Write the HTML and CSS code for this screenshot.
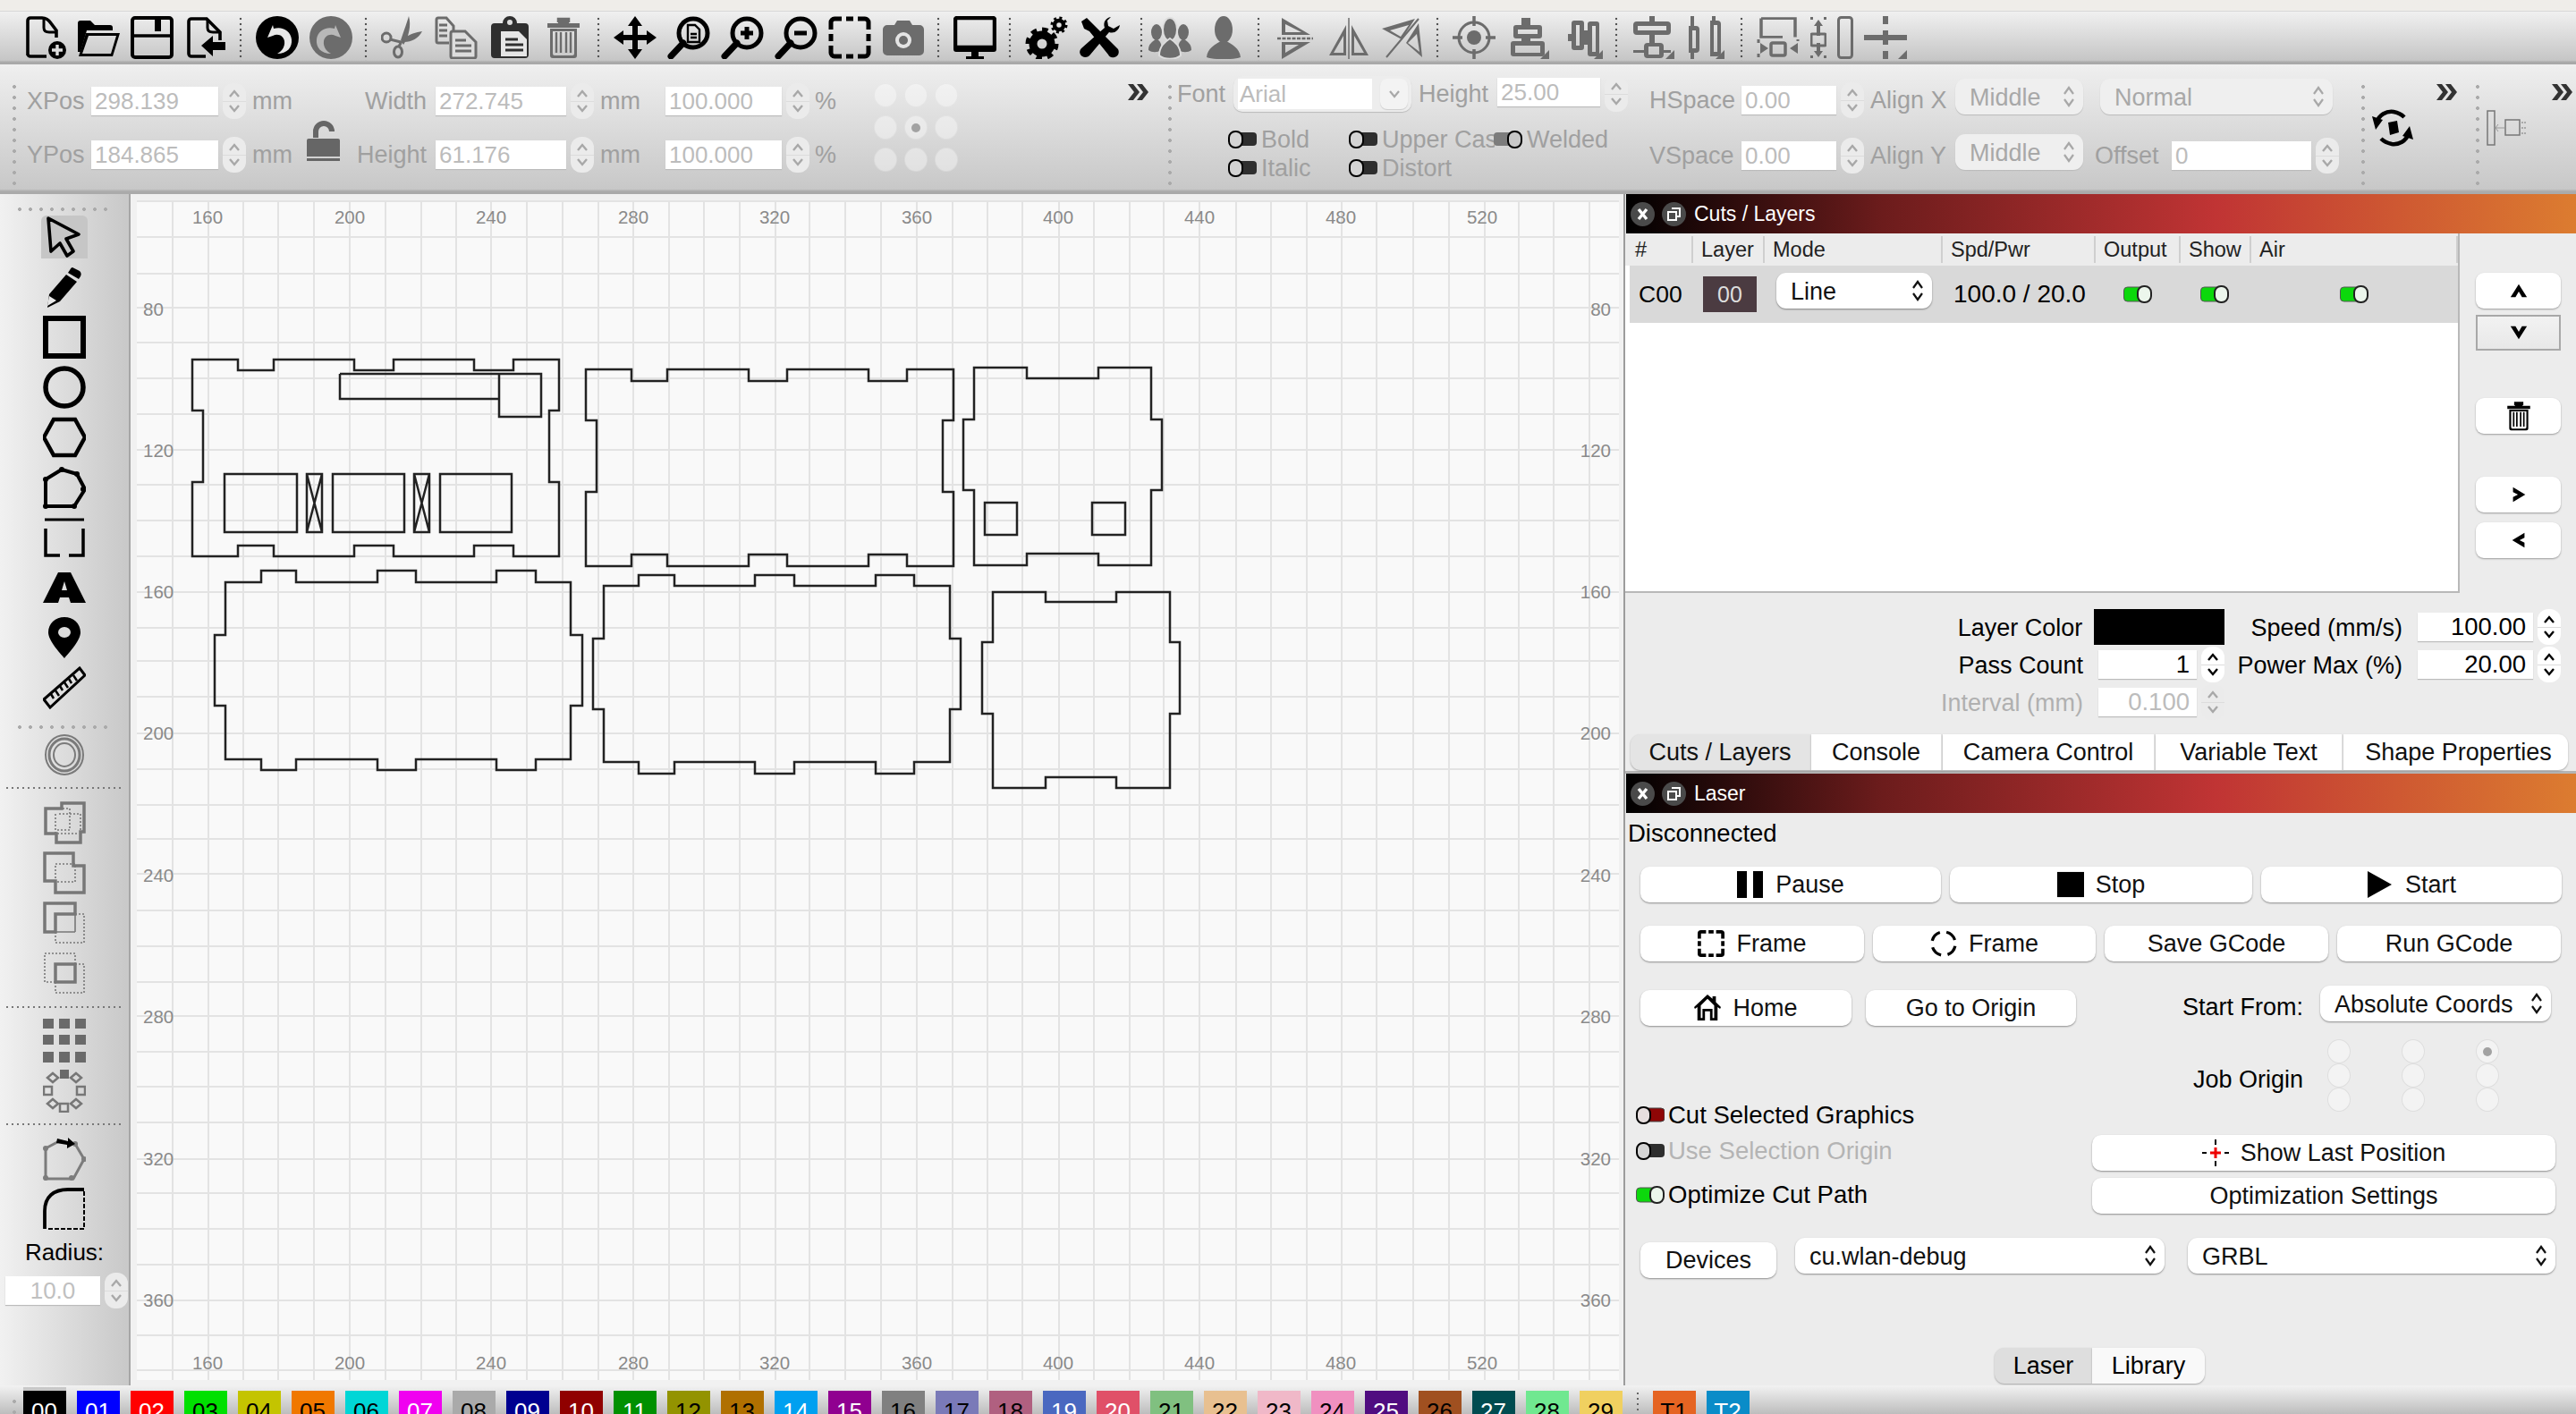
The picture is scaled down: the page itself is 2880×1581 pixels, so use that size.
FILE: index.html
```html
<!DOCTYPE html>
<html lang="en">
<head>
<meta charset="utf-8">
<title>LightBurn</title>
<link rel="stylesheet" href="styles.css">
</head>
<body>
<svg class="sprite" xmlns="http://www.w3.org/2000/svg">
  <symbol id="spin" viewBox="0 0 26 40"><rect width="26" height="40" rx="12"/><path d="M0 20.5H26" stroke="#dcdcdc" stroke-width="1" fill="none"/><path d="M8 15l5-6 5 6M8 25l5 6 5-6" fill="none" stroke="currentColor" stroke-width="2.4"/></symbol>
  <symbol id="updown" viewBox="0 0 14 26"><path d="M2 10l5-7 5 7M2 16l5 7 5-7" fill="none" stroke="currentColor" stroke-width="2.2"/></symbol>
  <symbol id="tg-off" viewBox="0 0 32 20"><rect x="6" y="2" width="26" height="15" rx="4" fill="#2e2e2e"/><rect x="1" y="1" width="15" height="18" rx="7" fill="#d4d4d4" stroke="#000" stroke-width="2"/></symbol>
  <symbol id="tg-red" viewBox="0 0 32 20"><rect x="6" y="2" width="26" height="15" rx="4" fill="#8e0606" stroke="#444" stroke-width="1"/><rect x="1" y="1" width="15" height="18" rx="7" fill="#e6dede" stroke="#000" stroke-width="2"/></symbol>
  <symbol id="tg-on" viewBox="0 0 32 20"><rect x="0.500" y="2" width="26" height="16" rx="4" fill="#0cd80c" stroke="#555" stroke-width="1"/><rect x="16" y="1" width="15" height="18" rx="7" fill="#ecf6ec" stroke="#222" stroke-width="2"/></symbol>
  <symbol id="tg-weld" viewBox="0 0 32 20"><rect x="0" y="2" width="26" height="15" rx="4" fill="#7c7c7c"/><rect x="16" y="1" width="15" height="18" rx="7" fill="#c8c8c8" stroke="#000" stroke-width="2"/></symbol>
  <symbol id="win-x" viewBox="0 0 27 27"><circle cx="13.5" cy="13.5" r="13.5" fill="#4a4a4a"/><path d="M9 8l9 11M18 8l-9 11" stroke="#fff" stroke-width="3.4"/></symbol>
  <symbol id="win-r" viewBox="0 0 27 27"><circle cx="13.5" cy="13.5" r="13.5" fill="#4a4a4a"/><path d="M11 7h9v9h-3M7 11h9v9H7z" fill="none" stroke="#fff" stroke-width="2"/></symbol>
  <symbol id="chev" viewBox="0 0 27 20"><path d="M2 1h6l7 9-7 9H2l7-9zM12 1h6l7 9-7 9h-6l7-9z" fill="currentColor"/></symbol>
  <symbol id="trash" viewBox="0 0 48 48"><path d="M6 8h36v5H6zM18 8V3h12v5" fill="currentColor"/><path d="M18 7V3h12v4" fill="none" stroke="currentColor" stroke-width="2.5"/><path d="M9 14h30v30a3 3 0 0 1-3 3H12a3 3 0 0 1-3-3zM12 17v25a2 2 0 0 0 2 2h20a2 2 0 0 0 2-2V17z" fill="currentColor" fill-rule="evenodd"/><path d="M16 18v23M21 18v23M27 18v23M32 18v23" stroke="currentColor" stroke-width="2.4"/></symbol>
</svg>

<div class="app">
  <div class="titlestrip"></div>

  <div class="toolbar">
    <svg class="ic" viewBox="0 0 48 48"><path d="M5 44V5a3 3 0 0 1 3-3h13c5 0 8 3 10 6l6 8v8M26 45H8a3 3 0 0 1-3-3" fill="none" stroke="currentColor" stroke-width="3.6"/><path d="M23 3v10c0 4 3 5 6 5h8" fill="none" stroke="currentColor" stroke-width="3"/><circle cx="38" cy="38" r="10"/><path d="M38 32v12M32 38h12" stroke="#ddd" stroke-width="3.4"/></svg>
    <svg class="ic" viewBox="0 0 48 48"><path d="M1 8q0-3 3-3h11l5 5h17q3 0 3 3v3H11L4 40H1z"/><path fill-rule="evenodd" d="M10 19h38l-8 26H2zM13 22L6 42h32l6-20z"/></svg>
    <svg class="ic" viewBox="0 0 48 48"><rect x="2" y="2" width="44" height="44" rx="3" fill="none" stroke="currentColor" stroke-width="4"/><path d="M2 22h44" stroke="currentColor" stroke-width="3.5"/><path d="M27 4h7v13h-7z"/></svg>
    <svg class="ic" viewBox="0 0 48 48"><path d="M24 45H8a3 3 0 0 1-3-3V6a3 3 0 0 1 3-3h17l15 15v9" fill="none" stroke="currentColor" stroke-width="3.6"/><path d="M26 3v10c0 4 3 5 6 5h8" fill="none" stroke="currentColor" stroke-width="3"/><path d="M19 33l13-11v7h14v9H32v7z"/></svg>
    <span class="vsep"></span>
    <svg class="ic" viewBox="0 0 48 48"><ellipse cx="24" cy="24" rx="24" ry="24"/><path d="M19 10l-6 14 6-2c6-3 12 0 13 6 1 7-4 12-8 14 11 0 17-7 16-16-1-10-11-15-20-12z" fill="#e8e8e8"/></svg>
    <svg class="ic dim" viewBox="0 0 48 48"><circle cx="24" cy="24" r="24"/><path d="M29 10l6 14-6-2c-6-3-12 0-13 6-1 7 4 12 8 14-11 0-17-7-16-16 1-10 11-15 20-12z" fill="#b8b8b8"/></svg>
    <span class="vsep"></span>
    <svg class="ic dim" viewBox="0 0 48 48"><path d="M22 27C26 15 29 7 31 0c3 10 0 24-6 32zM26 25c6-5 13-7 20-8-4 8-12 12-20 12z"/><circle cx="6" cy="24" r="5" fill="none" stroke="currentColor" stroke-width="3"/><ellipse cx="19" cy="40" rx="4.500" ry="6" fill="none" stroke="currentColor" stroke-width="3"/><path d="M10 26l12 3M20 34l3-6" stroke="currentColor" stroke-width="3"/></svg>
    <svg class="ic dim" viewBox="0 0 48 48"><path d="M16 30H4a2 2 0 0 1-2-2V4a2 2 0 0 1 2-2h9l8 9v6" fill="none" stroke="currentColor" stroke-width="3"/><path d="M5 10h9M5 16h9M5 22h9" stroke="currentColor" stroke-width="3"/><path d="M20 17h14l12 12v16a2 2 0 0 1-2 2H20a2 2 0 0 1-2-2V19a2 2 0 0 1 2-2z" fill="#ddd" stroke="currentColor" stroke-width="3"/><path d="M23 27h12M23 33h18M23 39h18" stroke="currentColor" stroke-width="3"/></svg>
    <svg class="ic dark" viewBox="0 0 48 48"><path d="M7 8h9a8 8 0 0 1 16 0h9a4 4 0 0 1 4 4v31a4 4 0 0 1-4 4H7a4 4 0 0 1-4-4V12a4 4 0 0 1 4-4z"/><circle cx="24" cy="7" r="3" fill="#ddd"/><path d="M14 17h20l9 9v19H14z" fill="#e6e6e6"/><path d="M19 26h14M19 32h20M19 38h20" stroke="currentColor" stroke-width="3.2"/></svg>
    <svg class="ic dim" viewBox="0 0 48 48"><use href="#trash"/></svg>
    <span class="vsep"></span>
    <svg class="ic" viewBox="0 0 48 48"><path d="M24 0l8 11h-5v10h10v-5l11 8-11 8v-5H27v10h5l-8 11-8-11h5V27H11v5L0 24l11-8v5h10V11h-5z"/></svg>
    <svg class="ic" viewBox="0 0 48 48"><circle cx="29" cy="19" r="16" fill="none" stroke="currentColor" stroke-width="5"/><path d="M18 30L4 45" stroke="currentColor" stroke-width="7" stroke-linecap="round"/><path d="M23 10h8l5 5v14H23zM26 20h7M26 24h7" fill="none" stroke="currentColor" stroke-width="2.4"/></svg>
    <svg class="ic" viewBox="0 0 48 48"><circle cx="29" cy="19" r="16" fill="none" stroke="currentColor" stroke-width="5"/><path d="M18 30L4 45" stroke="currentColor" stroke-width="7" stroke-linecap="round"/><path d="M29 12v14M22 19h14" stroke="currentColor" stroke-width="5"/></svg>
    <svg class="ic" viewBox="0 0 48 48"><circle cx="29" cy="19" r="16" fill="none" stroke="currentColor" stroke-width="5"/><path d="M18 30L4 45" stroke="currentColor" stroke-width="7" stroke-linecap="round"/><path d="M22 19h14" stroke="currentColor" stroke-width="5"/></svg>
    <svg class="ic" viewBox="0 0 48 48"><path d="M15 3H7a4 4 0 0 0-4 4v8M33 3h8a4 4 0 0 1 4 4v8M15 45H7a4 4 0 0 1-4-4v-8M33 45h8a4 4 0 0 0 4-4v-8M20 3h8M20 45h8M3 20v8M45 20v8" fill="none" stroke="currentColor" stroke-width="5"/></svg>
    <svg class="ic dim" viewBox="0 0 48 48"><path d="M6 10h8l3-5h14l3 5h8a5 5 0 0 1 5 5v24a5 5 0 0 1-5 5H6a5 5 0 0 1-5-5V15a5 5 0 0 1 5-5z"/><circle cx="24" cy="27" r="9" fill="#e4e4e4"/><circle cx="24" cy="27" r="5"/></svg>
    <span class="vsep"></span>
    <svg class="ic" viewBox="0 0 48 48"><rect x="2" y="2" width="44" height="33" rx="2" fill="none" stroke="currentColor" stroke-width="4.500"/><path d="M0 33h48v4a3 3 0 0 1-3 3H3a3 3 0 0 1-3-3zM20 40h8v5h6v3H14v-3h6z"/></svg>
    <span class="vsep"></span>
    <svg class="ic" viewBox="0 0 48 48"><g fill="none" stroke="currentColor"><circle cx="19" cy="31" r="10" stroke-width="9"/><circle cx="19" cy="31" r="16" stroke-width="5" stroke-dasharray="6.500 6"/><circle cx="38" cy="10" r="5" stroke-width="4.500"/><circle cx="38" cy="10" r="8" stroke-width="3" stroke-dasharray="3 3.300"/></g></svg>
    <svg class="ic" viewBox="0 0 48 48"><path d="M36 1c-6 1-9 6-7 12L3 36c-3 3-2 7 1 9s7 1 9-2l21-25c6 2 11-2 12-8l-7 4-6-3-1-6z"/><path d="M3 6l6-4 35 35c2 4 0 8-4 9s-6-1-7-3L12 17 6 14z"/></svg>
    <span class="vsep narrow"></span>
    <svg class="ic dim" viewBox="0 0 48 48"><ellipse cx="9" cy="18" rx="6" ry="9"/><path d="M0 38c0-7 4-9 9-13 5 4 6 6 5 13-4 3-10 3-14 0z"/><ellipse cx="39" cy="18" rx="6" ry="9"/><path d="M48 38c0-7-4-9-9-13-5 4-6 6-5 13 4 3 10 3 14 0z"/><ellipse cx="24" cy="15" rx="8" ry="13" stroke="#ddd" stroke-width="2"/><path d="M24 25c-6 4-12 9-12 19 6 5 18 5 24 0 0-10-6-15-12-19z" stroke="#ddd" stroke-width="2"/></svg>
    <svg class="ic dim" viewBox="0 0 48 48"><ellipse cx="24" cy="15" rx="10" ry="15"/><path d="M24 26c-10 6-18 10-19 20 8 3 30 3 38 0-1-10-9-14-19-20z"/></svg>
    <span class="vsep"></span>
    <svg class="ic dim" viewBox="0 0 48 48"><path d="M9 2l32 19H9zM13 9v9h18zM9 29h32L9 48zM13 32v9l15-9z" fill-rule="evenodd"/><path d="M4 25h40" stroke="currentColor" stroke-width="2.500" stroke-dasharray="4 1.500"/></svg>
    <svg class="ic dim" viewBox="0 0 48 48"><path d="M21 10v34H2zM18 22L7 41h11zM27 10v34h19zM30 22l11 19H30z" fill-rule="evenodd"/><path d="M24 2v46" stroke="currentColor" stroke-width="1.500"/></svg>
    <svg class="ic dim" viewBox="0 0 48 48"><path d="M1 14L38 3 23 26zM10 16l21-6-9 13z" fill-rule="evenodd"/><path d="M42 8L46 46 28 30zM40 20L30 30 43 40z" fill-rule="evenodd"/><path d="M42 3L6 46" stroke="currentColor" stroke-width="2"/></svg>
    <span class="vsep"></span>
    <svg class="ic dim" viewBox="0 0 48 48"><circle cx="24" cy="24" r="17" fill="none" stroke="currentColor" stroke-width="3"/><circle cx="24" cy="24" r="8"/><path d="M24 0v11M24 37v11M0 24h11M37 24h11" stroke="currentColor" stroke-width="3.500"/></svg>
    <svg class="ic dim" viewBox="0 0 48 48"><path d="M17 2h10v8h10a3 3 0 0 1 3 3v9a3 3 0 0 1-3 3H27v3h13a3 3 0 0 1 3 3v11a3 3 0 0 1-3 3H8a3 3 0 0 1-3-3V31a3 3 0 0 1 3-3h9v-3H11a3 3 0 0 1-3-3v-9a3 3 0 0 1 3-3h6zM13 15v5h22v-5zM10 33v8h28v-8z" fill-rule="evenodd"/><path d="M48 38v10H38z"/></svg>
    <svg class="ic dim" viewBox="0 0 48 48"><path d="M16 5h8a3 3 0 0 1 3 3v8h4V9a3 3 0 0 1 3-3h7a3 3 0 0 1 3 3v33a3 3 0 0 1-3 3h-7a3 3 0 0 1-3-3V32h-4v3a3 3 0 0 1-3 3h-8a3 3 0 0 1-3-3v-7H9V20h4v-12a3 3 0 0 1 3-3zM18 10v23h4V10zM36 11v29h4V11z" fill-rule="evenodd"/><path d="M48 38v10H38z"/></svg>
    <span class="vsep"></span>
    <svg class="ic dim" viewBox="0 0 48 48"><path d="M6 6h34a4 4 0 0 1 4 4v7a4 4 0 0 1-4 4H6a4 4 0 0 1-4-4v-7a4 4 0 0 1 4-4zM7 11v5h32v-5zM18 30h14a4 4 0 0 1 4 4v4h8v3h-8v2a4 4 0 0 1-4 4H18a4 4 0 0 1-4-4v-2H2v-3h12v-4a4 4 0 0 1 4-4zM19 34v9h12v-9z" fill-rule="evenodd"/><path d="M20 0h6v6h-6zM20 21h6v9h-6zM48 38v10H38z"/></svg>
    <svg class="ic dim" viewBox="0 0 48 48"><path d="M4 11h8a4 4 0 0 1 4 4v22a4 4 0 0 1-4 4H4zM8 16v20h4V16zM28 5h8a4 4 0 0 1 4 4v32a4 4 0 0 1-4 4h-8zM32 10v30h4V10z" fill-rule="evenodd"/><path d="M6 0h4v11H6zM6 41h4v7H6zM30 0h4v5h-4z"/><path d="M44 38v10H34z"/></svg>
    <span class="vsep"></span>
    <svg class="ic dim" viewBox="0 0 48 48"><path d="M5 2h38v26M5 2v26h24" fill="none" stroke="currentColor" stroke-width="3.500" transform="translate(0 1) scale(1 .8)"/><path d="M4 30l9 6-9 6zM46 30l-9 6 9 6z"/><rect x="16" y="30" width="16" height="14" rx="2" fill="none" stroke="currentColor" stroke-width="3.500"/><path d="M2 26v4M2 42v4M46 26v2" stroke="currentColor" stroke-width="3"/></svg>
    <svg class="ic dim thin" viewBox="0 0 18 48"><path d="M9 4l5 7h-3v11H7V11H4zM9 46l5-7h-3V30H7v9H4z"/><rect x="1" y="20" width="16" height="13" rx="1" fill="none" stroke="currentColor" stroke-width="3"/><path d="M0 1h3v3H0zM15 1h3v3h-3zM0 44h3v3H0zM15 44h3v3h-3z"/></svg>
    <svg class="ic dim thin" viewBox="0 0 18 48"><rect x="1.500" y="1.500" width="15" height="45" rx="3" fill="none" stroke="currentColor" stroke-width="3"/></svg>
    <svg class="ic dim" viewBox="0 0 48 48"><path d="M21 0h6v9h-6zM21 16h6v16h-6zM8 21h32v6H8zM0 21h10v6H0zM38 21h10v6H38zM21 39h6v9h-6z"/><path d="M48 38v10H38z"/></svg>
  </div>

  <div class="props">
    <div class="sec sec-a">
      <span class="vgrip"></span>
      <div class="col pos">
        <div class="field"><span class="lb w-72">XPos</span><span class="inp w-142 ml-8">298.139</span><svg class="spin ml-5"><use href="#spin"/></svg><span class="lb ml-7">mm</span></div>
        <div class="field"><span class="lb w-72">YPos</span><span class="inp w-142 ml-8">184.865</span><svg class="spin ml-5"><use href="#spin"/></svg><span class="lb ml-7">mm</span></div>
      </div>
      <svg class="lock" viewBox="0 0 37 48"><path d="M8 19v-7a9 9 0 0 1 18 0" fill="none" stroke="currentColor" stroke-width="6" transform="translate(2 0)"/><path d="M2 20h33a2 2 0 0 1 2 2v18H0V22a2 2 0 0 1 2-2zM0 42h37v3H0z"/></svg>
      <div class="col size">
        <div class="field"><span class="lb w-100 ta-r">Width</span><span class="inp w-146 ml-10">272.745</span><svg class="spin ml-5"><use href="#spin"/></svg><span class="lb ml-7">mm</span></div>
        <div class="field"><span class="lb w-100 ta-r">Height</span><span class="inp w-146 ml-10">61.176</span><svg class="spin ml-5"><use href="#spin"/></svg><span class="lb ml-7">mm</span></div>
      </div>
      <div class="col pct">
        <div class="field"><span class="inp w-130">100.000</span><svg class="spin ml-5"><use href="#spin"/></svg><span class="lb ml-6">%</span></div>
        <div class="field"><span class="inp w-130">100.000</span><svg class="spin ml-5"><use href="#spin"/></svg><span class="lb ml-6">%</span></div>
      </div>
      <div class="radios rad-props">
        <i class="rad"></i><i class="rad"></i><i class="rad"></i>
        <i class="rad"></i><i class="rad sel"></i><i class="rad"></i>
        <i class="rad"></i><i class="rad"></i><i class="rad"></i>
      </div>
      <svg class="chev chev-a"><use href="#chev"/></svg>
    </div>

    <div class="sec sec-b">
      <span class="vgrip"></span>
      <div class="fontbox">
        <div class="fontrow">
          <span class="lb">Font</span>
          <span class="fontcombo"><span class="fontname">Arial</span><span class="fontdrop"><svg class="dropv" viewBox="0 0 14 10"><path d="M2 2l5 6 5-6" fill="none" stroke="currentColor" stroke-width="2.200"/></svg></span></span>
          <span class="lb ml-8">Height</span>
          <span class="inp w-115 ml-10 up-4">25.00</span>
          <svg class="spin ml-5"><use href="#spin"/></svg>
        </div>
        <div class="checks">
          <span class="chk"><svg class="tg"><use href="#tg-off"/></svg><span class="lb">Bold</span></span>
          <span class="chk c-upper"><svg class="tg"><use href="#tg-off"/></svg><span class="lb">Upper Case</span></span>
          <span class="chk c-weld"><svg class="tg"><use href="#tg-weld"/></svg><span class="lb">Welded</span></span>
          <span class="chk"><svg class="tg"><use href="#tg-off"/></svg><span class="lb">Italic</span></span>
          <span class="chk c-upper"><svg class="tg"><use href="#tg-off"/></svg><span class="lb">Distort</span></span>
        </div>
      </div>
      <div class="col spacing">
        <div class="field"><span class="lb w-94 ta-r">HSpace</span><span class="inp w-106 ml-9">0.00</span><svg class="spin ml-5"><use href="#spin"/></svg><span class="lb w-85 ml-7">Align X</span>
          <span class="combo dis w-143 ml-10 raise"><span>Middle</span><svg class="ud"><use href="#updown"/></svg></span>
          <span class="combo dis w-260 ml-19 raise"><span>Normal</span><svg class="ud"><use href="#updown"/></svg></span></div>
        <div class="field"><span class="lb w-94 ta-r">VSpace</span><span class="inp w-106 ml-9">0.00</span><svg class="spin ml-5"><use href="#spin"/></svg><span class="lb w-85 ml-7">Align Y</span>
          <span class="combo dis w-143 ml-10 raise"><span>Middle</span><svg class="ud"><use href="#updown"/></svg></span>
          <span class="lb ml-13 w-76">Offset</span><span class="inp w-156 ml-10">0</span><svg class="spin ml-5"><use href="#spin"/></svg></div>
      </div>
    </div>

    <div class="sec sec-c">
      <span class="vgrip"></span>
      <svg class="syncic" viewBox="0 0 48 42"><path d="M6 15C9 6 17 2 25 3c5 1 9 3 12 6M42 27c-3 9-11 13-19 12-5-1-9-3-12-6" fill="none" stroke="#000" stroke-width="4.500"/><path d="M1 8l12 4-8 11zM47 34L35 30l8-11z"/><path d="M19 15l10-2 2 13-10 3z"/></svg>
      <svg class="chev chev-c"><use href="#chev"/></svg>
    </div>

    <div class="sec sec-d">
      <span class="vgrip"></span>
      <svg class="laseric" viewBox="0 0 45 40"><rect x="1" y="1" width="8" height="38" fill="none" stroke="#777" stroke-width="1.500"/><path d="M10 20h10M13 16l-3 4 3 4" fill="none" stroke="#999" stroke-width="1"/><rect x="21" y="11" width="16" height="17" fill="none" stroke="#777" stroke-width="1.500"/><path d="M39 14h5M39 20h5M39 26h5" stroke="#999" stroke-width="1.500" stroke-dasharray="2 1"/></svg>
      <svg class="chev chev-d"><use href="#chev"/></svg>
    </div>
  </div>

  <div class="main">
    <div class="tools">
      <span class="gripdots"></span>
      <span class="tool active"><svg viewBox="0 0 48 48"><path d="M6 3l34 18-14 5 8 14-7 5-8-14-10 9z" fill="none" stroke="#000" stroke-width="3.600" stroke-linejoin="round"/></svg></span>
      <span class="tool"><svg viewBox="0 0 48 48"><path d="M33 2l8 4c2 2 2 4 1 6l-2 3-12-7 2-3c1-2 2-3 3-3zM26 10l12 8-19 22-14 7 2-15z"/><path d="M7 34l-2 11 10-6z" fill="#e8e8e8"/></svg></span>
      <span class="tool"><svg viewBox="0 0 48 48"><rect x="3" y="3" width="42" height="42" fill="none" stroke="#000" stroke-width="6"/></svg></span>
      <span class="tool"><svg viewBox="0 0 48 48"><circle cx="24" cy="24" r="21" fill="none" stroke="#000" stroke-width="5.500"/></svg></span>
      <span class="tool"><svg viewBox="0 0 48 48"><path d="M13 4h24l11 20-11 20H13L2 24z" fill="none" stroke="#000" stroke-width="4.500" transform="translate(-1 0)"/></svg></span>
      <span class="tool"><svg viewBox="0 0 48 48"><path d="M3 15L21 4l17 5 9 17-12 19H3z" fill="none" stroke="#000" stroke-width="4"/><circle cx="3" cy="15" r="3"/><circle cx="21" cy="4" r="3"/><circle cx="38" cy="9" r="3"/><circle cx="45" cy="26" r="3"/><circle cx="35" cy="45" r="3"/><circle cx="3" cy="45" r="3"/></svg></span>
      <span class="tool"><svg viewBox="0 0 48 48"><path d="M2 4h44" stroke="#000" stroke-width="3"/><path d="M3 14v30h16M45 14v30H29" fill="none" stroke="#000" stroke-width="3.500"/></svg></span>
      <span class="tool"><svg viewBox="0 0 48 48"><path d="M17 7h14l17 34H31l-2-6H19l-2 6H0zM24 17l-3 10h6z" fill-rule="evenodd"/></svg></span>
      <span class="tool"><svg viewBox="0 0 48 48"><path d="M24 1c10 0 18 7 18 17 0 9-12 22-18 29C18 40 6 27 6 18 6 8 14 1 24 1z"/><ellipse cx="24" cy="18" rx="7" ry="6" fill="#ddd"/></svg></span>
      <span class="tool"><svg viewBox="0 0 48 48"><path d="M1 37L41 2l6 8L8 46z" fill="#e0e0e0" stroke="#000" stroke-width="3"/><path d="M9 31l3 5M14 27l4 6M19 22l3 5M24 18l4 6M29 14l3 5M34 10l4 6" stroke="#000" stroke-width="2.500"/></svg></span>
      <span class="gripdots g2"></span>
      <svg class="solo s-off" viewBox="0 0 48 48"><ellipse cx="24" cy="24" rx="21" ry="22" fill="none" stroke="#7a7a7a" stroke-width="2"/><ellipse cx="24" cy="24" rx="17" ry="18" fill="none" stroke="#7a7a7a" stroke-width="3"/><ellipse cx="24" cy="24" rx="12" ry="13" fill="none" stroke="#7a7a7a" stroke-width="2"/></svg>
      <span class="dotline d1"></span>
      <svg class="solo" viewBox="0 0 48 48"><path d="M3 8h18V2h25v32H42v12H15V36H3z" fill="none" stroke="#777" stroke-width="3.500"/><path d="M14 14v22h26M30 8v8M18 14h24v18M22 8h8v24H14" fill="none" stroke="#777" stroke-width="1.600" stroke-dasharray="2 2"/></svg>
      <svg class="solo" viewBox="0 0 48 48"><path d="M2 2h32v14h12v30H14V33H2z" fill="none" stroke="#777" stroke-width="3.500"/><rect x="14" y="14" width="22" height="20" fill="none" stroke="#777" stroke-width="1.600" stroke-dasharray="2 2"/></svg>
      <svg class="solo" viewBox="0 0 48 48"><path d="M2 2h34v12H14v20H2z" fill="none" stroke="#777" stroke-width="3.500"/><path d="M36 14h10v32H14V34h22zM14 34h22V14" fill="none" stroke="#777" stroke-width="1.600" stroke-dasharray="2 2"/></svg>
      <svg class="solo" viewBox="0 0 48 48"><rect x="14" y="14" width="22" height="20" fill="none" stroke="#777" stroke-width="3.500"/><path d="M36 14V2H2v32h12M36 14h10v32H14V34" fill="none" stroke="#777" stroke-width="1.600" stroke-dasharray="2 2"/></svg>
      <span class="dotline d2"></span>
      <svg class="solo s-grid" viewBox="0 0 48 50"><path fill="#6a6a6a" d="M0 0h12v11H0zM18 0h12v11H18zM36 0h12v11H36zM0 18h12v11H0zM18 18h12v11H18zM36 18h12v11H36zM0 37h12v12H0zM18 37h12v12H18zM36 37h12v12H36z"/></svg>
      <svg class="solo" viewBox="0 0 48 48"><rect x="19" y="0" width="10" height="10" fill="#6a6a6a"/><g fill="none" stroke="#777" stroke-width="2.500"><rect x="1" y="19" width="9" height="9"/><rect x="38" y="19" width="9" height="9"/><rect x="19" y="38" width="9" height="9"/><path d="M11 4l6 5-6 5-6-5zM37 4l6 5-6 5-6-5zM11 33l6 5-6 5-6-5zM37 33l6 5-6 5-6-5z"/></g></svg>
      <span class="dotline d3"></span>
      <svg class="solo" viewBox="0 0 48 48"><path d="M3 12L18 4l18 3 10 17-12 22H3z" fill="none" stroke="#7c7c7c" stroke-width="3"/><circle cx="3" cy="12" r="3" fill="#7c7c7c"/><circle cx="36" cy="7" r="3" fill="#7c7c7c"/><circle cx="46" cy="24" r="3" fill="#7c7c7c"/><circle cx="32" cy="45" r="3" fill="#7c7c7c"/><circle cx="3" cy="45" r="3" fill="#7c7c7c"/><path d="M16 1l12 3 0-4 8 7-9 5 0-4-12-2z" fill="#000"/></svg>
      <svg class="solo" viewBox="0 0 48 48"><path d="M2 46V26C2 10 12 2 28 2h18" fill="none" stroke="#000" stroke-width="3.800"/><path d="M46 4v42H6" fill="none" stroke="#000" stroke-width="2" stroke-dasharray="5 2"/></svg>
      <span class="radius">Radius:</span>
      <div class="radfield"><span class="inp radinp">10.0</span><svg class="spin radspin"><use href="#spin"/></svg></div>
    </div>

    <div class="canvas">
      <svg class="plot" viewBox="146 217 1669 1332">
        <rect class="cv-out" x="146" y="217" width="1669" height="1332"/>
        <rect class="cv-in" x="153" y="224" width="1657" height="1319"/>
        <path class="grid" d="M193 224V1543M233 224V1543M272 224V1543M311 224V1543M351 224V1543M391 224V1543M431 224V1543M471 224V1543M510 224V1543M549 224V1543M589 224V1543M629 224V1543M669 224V1543M708 224V1543M748 224V1543M787 224V1543M827 224V1543M867 224V1543M905 224V1543M945 224V1543M985 224V1543M1025 224V1543M1065 224V1543M1104 224V1543M1143 224V1543M1184 224V1543M1223 224V1543M1263 224V1543M1301 224V1543M1341 224V1543M1382 224V1543M1421 224V1543M1461 224V1543M1500 224V1543M1539 224V1543M1580 224V1543M1620 224V1543M1660 224V1543M1698 224V1543M1737 224V1543M1777 224V1543"/>
        <path class="grid" d="M153 225H1810M153 265H1810M153 306H1810M153 344H1810M153 383H1810M153 423H1810M153 463H1810M153 503H1810M153 542H1810M153 582H1810M153 622H1810M153 662H1810M153 702H1810M153 739H1810M153 779H1810M153 820H1810M153 860H1810M153 900H1810M153 938H1810M153 977H1810M153 1018H1810M153 1058H1810M153 1098H1810M153 1136H1810M153 1176H1810M153 1215H1810M153 1255H1810M153 1296H1810M153 1334H1810M153 1374H1810M153 1414H1810M153 1454H1810M153 1493H1810M153 1532H1810"/>
        <g class="rul mid">
          <text x="232" y="250">160</text><text x="391" y="250">200</text><text x="549" y="250">240</text><text x="708" y="250">280</text><text x="866" y="250">320</text><text x="1025" y="250">360</text><text x="1183" y="250">400</text><text x="1341" y="250">440</text><text x="1499" y="250">480</text><text x="1657" y="250">520</text>
          <text x="232" y="1531">160</text><text x="391" y="1531">200</text><text x="549" y="1531">240</text><text x="708" y="1531">280</text><text x="866" y="1531">320</text><text x="1025" y="1531">360</text><text x="1183" y="1531">400</text><text x="1341" y="1531">440</text><text x="1499" y="1531">480</text><text x="1657" y="1531">520</text>
        </g>
        <g class="rul">
          <text x="160" y="353">80</text><text x="160" y="511">120</text><text x="160" y="669">160</text><text x="160" y="827">200</text><text x="160" y="986">240</text><text x="160" y="1144">280</text><text x="160" y="1303">320</text><text x="160" y="1461">360</text>
        </g>
        <g class="rul end">
          <text x="1801" y="353">80</text><text x="1801" y="511">120</text><text x="1801" y="669">160</text><text x="1801" y="827">200</text><text x="1801" y="986">240</text><text x="1801" y="1144">280</text><text x="1801" y="1303">320</text><text x="1801" y="1461">360</text>
        </g>
        <g class="cut">
          <path d="M215 402H266V414H306V402H396V414H440V402H530V414H574V402H625V459H614V539H625V622H574V610H530V622H440V610H396V622H306V610H266V622H215V539H227V459H215Z"/>
          <path d="M380 418H605V466H558V418M380 418V446H558"/>
          <path d="M251 530H332V595H251ZM343 530H360V595H343ZM343 530L360 595M360 530L343 595M372 530H452V595H372ZM463 530H480V595H463ZM463 530L480 595M480 530L463 595M492 530H572V595H492Z"/>
          <path d="M655 413H706V426H746V413H837V426H880V413H971V426H1014V413H1066V470H1054V550H1066V633H1014V620H971V633H880V620H837V633H746V620H706V633H655V550H667V470H655Z"/>
          <path d="M252 651H292V638H331V651H422V638H465V651H555V638H599V651H638V710H651V789H638V849H599V861H555V849H465V861H422V849H331V861H292V849H252V789H240V710H252Z"/>
          <path d="M675 655H714V643H754V655H844V643H888V655H979V643H1022V655H1062V714H1074V793H1062V852H1022V865H979V852H888V865H844V852H754V865H714V852H675V793H663V714H675Z"/>
          <path d="M1089 411H1148V423H1228V411H1287V469H1299V548H1287V632H1228V619H1148V632H1089V548H1077V469H1089Z"/>
          <path d="M1101 562H1137V598H1101ZM1221 562H1258V598H1221Z"/>
          <path d="M1110 662H1169V673H1248V662H1308V718H1319V798H1308V881H1248V869H1169V881H1110V798H1098V718H1110Z"/>
        </g>
      </svg>
    </div>

    <div class="side">
      <section class="cuts">
        <header class="wintitle"><svg class="winbtn"><use href="#win-x"/></svg><svg class="winbtn"><use href="#win-r"/></svg><span class="wintext">Cuts / Layers</span></header>
        <div class="cuts-top">
          <div class="table">
            <div class="thead">
              <span class="th w-74">#</span><span class="th w-80">Layer</span><span class="th w-199">Mode</span><span class="th w-171">Spd/Pwr</span><span class="th w-95">Output</span><span class="th w-79">Show</span><span class="th w-231">Air</span>
            </div>
            <div class="trow">
              <span class="tc-id">C00</span>
              <span class="tc-sw">00</span>
              <span class="combo tc-mode"><span>Line</span><svg class="ud"><use href="#updown"/></svg></span>
              <span class="tc-spd">100.0 / 20.0</span>
              <svg class="tg"><use href="#tg-on"/></svg>
              <svg class="tg ml-54"><use href="#tg-on"/></svg>
              <svg class="tg ml-124"><use href="#tg-on"/></svg>
            </div>
          </div>
          <div class="sidebtns">
            <span class="sbtn b-up"><svg viewBox="0 0 24 24"><path d="M12 4l10 16h-6l-4-7-4 7H2z"/></svg></span>
            <span class="sbtn focus"><svg viewBox="0 0 24 24"><path d="M12 20L2 4h6l4 7 4-7h6z"/></svg></span>
            <span class="sbtn b-tr"><svg viewBox="0 0 48 48"><use href="#trash"/></svg></span>
            <span class="sbtn b-nx"><svg viewBox="0 0 24 24"><path d="M5 3l15 9-15 9v-6l6-3-6-3z"/></svg></span>
            <span class="sbtn b-pv"><svg viewBox="0 0 24 24"><path d="M19 3L4 12l15 9v-6l-6-3 6-3z"/></svg></span>
          </div>
        </div>
        <div class="layerprops">
          <div class="lp-left">
            <div class="lp-row"><span class="lpl">Layer Color</span><span class="colorwell"></span></div>
            <div class="lp-row"><span class="lpl">Pass Count</span><span class="inp live ta-r w-110 ml-17">1</span><svg class="spin live ml-5"><use href="#spin"/></svg></div>
            <div class="lp-row off"><span class="lpl">Interval (mm)</span><span class="inp ta-r w-110 ml-17">0.100</span><svg class="spin ml-5"><use href="#spin"/></svg></div>
          </div>
          <div class="lp-right">
            <div class="lp-row"><span class="lpr">Speed (mm/s)</span><span class="inp live ta-r w-129 ml-17">100.00</span><svg class="spin live ml-5"><use href="#spin"/></svg></div>
            <div class="lp-row"><span class="lpr">Power Max (%)</span><span class="inp live ta-r w-129 ml-17">20.00</span><svg class="spin live ml-5"><use href="#spin"/></svg></div>
          </div>
        </div>
        <nav class="tabs">
          <span class="tab on w-202">Cuts / Layers</span><span class="tab w-147">Console</span><span class="tab w-238">Camera Control</span><span class="tab w-210">Variable Text</span><span class="tab last w-251">Shape Properties</span>
        </nav>
      </section>

      <section class="laser">
        <header class="wintitle"><svg class="winbtn"><use href="#win-x"/></svg><svg class="winbtn"><use href="#win-r"/></svg><span class="wintext">Laser</span></header>
        <div class="status">Disconnected</div>
        <div class="btnrow r1">
          <span class="btn w-336"><svg class="bi" viewBox="0 0 30 30"><path d="M0 0h11v30H0zM18 0h11v30H18z"/></svg>Pause</span>
          <span class="btn w-338"><svg class="bi" viewBox="0 0 32 30"><path d="M0 0h32v30H0z"/></svg>Stop</span>
          <span class="btn w-336"><svg class="bi" viewBox="0 0 30 30"><path d="M1 0l27 15L1 30z"/></svg>Start</span>
        </div>
        <div class="btnrow r2">
          <span class="btn w-250"><svg class="bi" viewBox="0 0 32 32"><path d="M10 2H4a2 2 0 0 0-2 2v6M22 2h6a2 2 0 0 1 2 2v6M10 30H4a2 2 0 0 1-2-2v-6M22 30h6a2 2 0 0 0 2-2v-6M13 2h6M13 30h6M2 13v6M30 13v6" fill="none" stroke="#000" stroke-width="4"/></svg>Frame</span>
          <span class="btn w-249"><svg class="bi" viewBox="0 0 32 32"><circle cx="16" cy="16" r="14" fill="none" stroke="#000" stroke-width="3.500" stroke-dasharray="14 8" stroke-dashoffset="-3"/></svg>Frame</span>
          <span class="btn w-250">Save GCode</span>
          <span class="btn w-250">Run GCode</span>
        </div>
        <div class="lasergrid">
          <div class="lg-left">
            <div class="btnrow r3">
              <span class="btn w-236"><svg class="bi" viewBox="0 0 32 32"><path d="M16 0L0 15l1 2 3-2v16h9V20h6v11h9V15l3 2 1-2-6-6V2h-4v3zM8 13l8-8 8 8v15h-2V17H10v11H8z" fill-rule="evenodd"/></svg>Home</span>
              <span class="btn w-235">Go to Origin</span>
            </div>
            <label class="opt o1"><svg class="tg"><use href="#tg-red"/></svg><span>Cut Selected Graphics</span></label>
            <label class="opt o2 off"><svg class="tg"><use href="#tg-off"/></svg><span>Use Selection Origin</span></label>
            <label class="opt o3"><svg class="tg"><use href="#tg-on"/></svg><span>Optimize Cut Path</span></label>
          </div>
          <div class="lg-right">
            <div class="startfrom"><span class="sf-l">Start From:</span><span class="combo w-258"><span>Absolute Coords</span><svg class="ud"><use href="#updown"/></svg></span></div>
            <div class="origin"><span class="sf-l">Job Origin</span>
              <div class="radios rad-job">
                <i class="rad"></i><i class="rad"></i><i class="rad sel"></i>
                <i class="rad"></i><i class="rad"></i><i class="rad"></i>
                <i class="rad"></i><i class="rad"></i><i class="rad"></i>
              </div>
            </div>
            <span class="btn wide m1"><svg class="bi" viewBox="0 0 30 30"><path d="M15 0v6M15 24v6M0 15h5M25 15h5" fill="none" stroke="#000" stroke-width="2"/><path d="M15 9v12M9 15h12" stroke="#e00" stroke-width="3"/></svg>Show Last Position</span>
            <span class="btn wide m2">Optimization Settings</span>
          </div>
        </div>
        <div class="devrow">
          <span class="btn w-152 down-5">Devices</span>
          <span class="combo w-413 ml-21"><span>cu.wlan-debug</span><svg class="ud"><use href="#updown"/></svg></span>
          <span class="combo w-411 ml-26"><span>GRBL</span><svg class="ud"><use href="#updown"/></svg></span>
        </div>
        <nav class="tabs2"><span class="ltab on">Laser</span><span class="ltab lib">Library</span></nav>
      </section>
    </div>
  </div>

  <div class="palette">
    <span class="pgrip"></span>
    <span class="sw sel c00">00</span><span class="sw c01">01</span><span class="sw c02">02</span><span class="sw c03">03</span><span class="sw c04">04</span><span class="sw c05">05</span><span class="sw c06">06</span><span class="sw c07">07</span><span class="sw c08">08</span><span class="sw c09">09</span><span class="sw c10">10</span><span class="sw c11">11</span><span class="sw c12">12</span><span class="sw c13">13</span><span class="sw c14">14</span><span class="sw c15">15</span><span class="sw c16">16</span><span class="sw c17">17</span><span class="sw c18">18</span><span class="sw c19">19</span><span class="sw c20">20</span><span class="sw c21">21</span><span class="sw c22">22</span><span class="sw c23">23</span><span class="sw c24">24</span><span class="sw c25">25</span><span class="sw c26">26</span><span class="sw c27">27</span><span class="sw c28">28</span><span class="sw c29">29</span>
    <span class="pgrip2"></span>
    <span class="sw t1">T1</span><span class="sw t2">T2</span>
  </div>
</div>
</body>
</html>
```
FILE: styles.css
```css
* { box-sizing: border-box; }
html, body { margin: 0; padding: 0; background: #ececec; }
body { font-family: "Liberation Sans", Arial, sans-serif; font-size: 27px; color: #000; }
svg { display: block; flex: none; }
.sprite { display: none; }

.app { width: 2880px; height: 1581px; overflow: hidden; display: flex; flex-direction: column; }
.titlestrip { height: 12px; background: #efede9; flex: none; }

/* top icon toolbar */
.toolbar { height: 60px; flex: none; display: flex; align-items: flex-start; padding: 5px 0 0 26px; background: linear-gradient(#f0f0f0, #c6c6c6 92%, #a8a8a8 96%, #a8a8a8); border-top: 1px solid #d8d8d8; }
.ic { width: 48px; height: 48px; margin-right: 12px; color: #000; fill: currentColor; }
.ic.dim { color: #6c6c6c; }
.ic.dark { color: #2f2f2f; }
.ic.thin { width: 18px; }
.vsep { width: 20px; height: 50px; flex: none; background: radial-gradient(circle, #555 1.2px, transparent 1.6px) 1px 0 / 4px 6px repeat-y; }
.vsep.narrow { width: 18px; background-position: 8px 0; }

/* properties toolbar */
.props { height: 145px; flex: none; display: flex; background: linear-gradient(#efefef, #c8c8c8 96%, #aaa 98%, #aaa); color: #a2a2a2; }
.sec { display: flex; flex: none; height: 100%; padding-top: 16px; }
.sec-a { width: 1306px; padding-left: 14px; }
.sec-b { width: 1334px; }
.sec-c { width: 128px; }
.sec-d { width: 112px; }
.vgrip { width: 4px; height: 118px; margin-top: 3px; flex: none; background: radial-gradient(circle, #aaa 1.8px, transparent 2.2px) 0 0 / 4px 12px repeat-y; }
.col { display: flex; flex-direction: column; gap: 20px; margin-top: 5px; }
.field { display: flex; align-items: center; height: 40px; }
.lb { font-size: 27px; white-space: nowrap; color: #a0a0a0; flex: none; }
.inp { display: block; flex: none; height: 32px; line-height: 32px; background: #fff; padding: 0 4px; color: #bcbcbc; font-size: 26px; box-shadow: 0 1px 1px #bbb; white-space: nowrap; overflow: hidden; }
.lp-row .inp { font-size: 27.5px; padding-right: 8px; }
.inp.live { color: #000; }
.ta-r { text-align: right; }
.spin { width: 26px; height: 40px; flex: none; fill: #ebebeb; color: #a8a8a8; }
.spin.live { fill: #fff; color: #000; }
.pos { margin-left: 4px; }
.lock { width: 37px; height: 48px; margin: 47px 0 0 16px; color: #666; fill: #666; flex: none; }
.size { width: 359px; margin-left: -3px; }
.pct { margin-left: 8px; }
.radios { display: grid; flex: none; }
.rad { display: flex; align-items: center; justify-content: center; width: 26px; height: 27px; border-radius: 50%; background: #f3f3f3; border: 1px solid #dedede; }
.rad.sel::after { content: ""; width: 10px; height: 10px; border-radius: 50%; background: #a2a2a2; }
.rad-props { grid-template-columns: 26px 26px 26px; column-gap: 8px; row-gap: 9px; margin: 5px 0 0 42px; align-self: flex-start; }
.rad-props .rad { background: rgba(255,255,255,.4); border-color: rgba(0,0,0,.04); }
.chev { width: 27px; height: 20px; color: #333; flex: none; }
.chev-a { margin: 5px 0 0 188px; }
.fontbox { margin-left: 6px; width: 530px; display: flex; flex-direction: column; }
.fontrow { display: flex; align-items: center; height: 40px; margin-top: -3px; }
.fontcombo { display: flex; align-items: center; flex: none; width: 199px; height: 40px; margin-left: 9px; background: #ededed; border-radius: 10px; padding: 0 4px 0 5px; box-shadow: 0 1px 1px #bbb; }
.fontname { width: 150px; height: 34px; line-height: 34px; background: #fff; color: #bcbcbc; padding-left: 2px; font-size: 26px; }
.fontdrop { display: flex; align-items: center; justify-content: center; width: 31px; height: 34px; margin-left: 9px; background: #f3f3f3; border-radius: 8px; color: #a8a8a8; box-shadow: 0 1px 1px #ccc; }
.dropv { width: 14px; height: 10px; }
.up-4 { margin-bottom: 4px; height: 32px; }
.checks { display: grid; grid-template-columns: 135px 162px auto; grid-auto-rows: 32px; margin: 15px 0 0 57px; }
.chk { display: flex; align-items: center; gap: 5px; height: 32px; white-space: nowrap; overflow: visible; }
.c-upper { width: 162px; }
.c-upper .lb { width: 126px; overflow: hidden; }
.tg { width: 32px; height: 20px; flex: none; }
.spacing { margin: 4px 0 0 -2px; gap: 22px; }
.combo { display: flex; align-items: center; justify-content: space-between; flex: none; height: 40px; padding: 0 9px 0 16px; background: #fff; border-radius: 11px; box-shadow: 0 1px 2px rgba(0,0,0,.4); font-size: 27px; color: #111; white-space: nowrap; }
.combo > span { padding-top: 2px; }
.combo.dis { background: #efefef; color: #a8a8a8; box-shadow: 0 1px 1px #bbb; }
.raise { margin-bottom: 8px; }
.ud { width: 14px; height: 26px; flex: none; }
.syncic { width: 48px; height: 42px; margin: 34px 0 0 7px; }
.chev-c { margin: 5px 0 0 23px; }
.laseric { width: 45px; height: 40px; margin: 35px 0 0 8px; }
.chev-d { margin: 5px 0 0 26px; }

.w-72 { width: 64px; margin-left: 8px; } .w-100 { width: 100px; } .w-142 { width: 142px; } .w-146 { width: 146px; }
.w-130 { width: 130px; } .w-115 { width: 115px; } .w-94 { width: 94px; } .w-106 { width: 106px; } .w-85 { width: 85px; }
.w-143 { width: 143px; } .w-260 { width: 260px; } .w-76 { width: 76px; } .w-156 { width: 156px; } .w-110 { width: 110px; }
.w-129 { width: 129px; } .w-336 { width: 336px; } .w-338 { width: 338px; } .w-250 { width: 250px; } .w-249 { width: 249px; }
.w-236 { width: 236px; } .w-235 { width: 235px; } .w-258 { width: 258px; } .w-152 { width: 152px; } .w-413 { width: 413px; } .w-411 { width: 411px; }
.w-74 { width: 74px; } .w-80 { width: 80px; } .w-199 { width: 199px; } .w-171 { width: 171px; } .w-95 { width: 95px; } .w-79 { width: 79px; } .w-231 { width: 231px; }
.w-202 { width: 202px; } .w-147 { width: 147px; } .w-238 { width: 238px; } .w-210 { width: 210px; } .w-251 { width: 251px; }
.ml-5 { margin-left: 5px; } .ml-6 { margin-left: 6px; } .ml-7 { margin-left: 7px; } .ml-8 { margin-left: 8px; } .ml-9 { margin-left: 9px; } .ml-10 { margin-left: 10px; }
.ml-13 { margin-left: 13px; } .ml-17 { margin-left: 17px; } .ml-19 { margin-left: 19px; } .ml-21 { margin-left: 21px; } .ml-26 { margin-left: 26px; } .ml-54 { margin-left: 54px; } .ml-124 { margin-left: 124px; }

/* main */
.main { height: 1332px; flex: none; display: flex; }
.tools { width: 146px; flex: none; display: flex; flex-direction: column; align-items: center; padding-top: 15px; background: linear-gradient(90deg, #f1f1f1, #c9c9c9 98%); border-right: 2px solid #a6a6a6; }
.gripdots { width: 112px; height: 4px; flex: none; margin-bottom: 5px; background: radial-gradient(circle, #aaa 1.8px, transparent 2.2px) 0 0 / 12px 4px repeat-x; }
.g2 { margin-top: 10px; }
.tool { display: flex; align-items: center; justify-content: center; width: 52px; height: 48px; margin-bottom: 8px; flex: none; border-radius: 6px 6px 0 0; }
.tool svg { width: 48px; height: 48px; }
.tool.active { background: #c6c6c6; }
.solo { width: 48px; height: 48px; margin-bottom: 8px; flex: none; }
.s-off { margin-bottom: 0; }
.dotline { width: 134px; height: 2px; flex: none; margin-bottom: 14px; background: radial-gradient(circle, #777 1px, transparent 1.2px) 0 0 / 6px 2px repeat-x; }
.d1 { margin-top: 12px; }
.d2 { margin-top: 5px; margin-bottom: 12px; }
.d3 { margin-top: 4px; }
.s-grid { height: 50px; margin-bottom: 7px; }
.radius { font-size: 26px; line-height: 30px; margin-top: 1px; height: 30px; }
.radfield { display: flex; align-items: center; align-self: flex-start; margin: 8px 0 0 6px; height: 40px; }
.radinp { width: 106px; text-align: center; color: #c0c0c0; }
.radspin { width: 26px; margin-left: 5px; }

.canvas { width: 1669px; flex: none; }
.plot { width: 1669px; height: 1332px; font-family: "Liberation Sans", Arial, sans-serif; }
.cv-out { fill: #f1f1f1; }
.cv-in { fill: #f9f9f9; }
.grid { stroke: #e3e3e3; stroke-width: 2; fill: none; }
.rul { font-size: 20.5px; fill: #8a8a8a; }
.rul.mid { text-anchor: middle; }
.rul.end { text-anchor: end; }
.cut { fill: none; stroke: #222; stroke-width: 2.5; }

/* side panels */
.side { width: 1065px; flex: none; display: flex; flex-direction: column; background: #ececec; border-left: 2px solid #9c9c9c; }
.cuts { height: 648px; flex: none; display: flex; flex-direction: column; border-bottom: 3px solid #b4b4b4; }
.laser { flex: 1; display: flex; flex-direction: column; }
.wintitle { height: 44px; flex: none; margin-left: 1px; display: flex; align-items: center; padding-left: 5px; gap: 8px; background: linear-gradient(90deg, #000 0, #6c1c1c 27%, #c03434 62%, #dc7c30 100%); }
.winbtn { width: 27px; height: 27px; }
.wintext { color: #fff; font-size: 23px; margin-left: 1px; }
.cuts-top { display: flex; height: 402px; flex: none; }
.table { width: 933px; flex: none; background: #fff; border: solid #b8b8b8; border-width: 0 2px 2px 0; }
.thead { display: flex; height: 36px; background: #ececec; padding-left: 2px; }
.th { height: 30px; line-height: 30px; margin-top: 3px; padding-left: 9px; font-size: 23.5px; color: #222; border-right: 2px solid #cfcfcf; flex: none; white-space: nowrap; }
.trow { display: flex; align-items: center; height: 64px; margin-left: 5px; background: #d9d9d9; }
.tc-id { width: 82px; padding-left: 10px; font-size: 26.5px; }
.tc-sw { width: 60px; height: 40px; line-height: 40px; text-align: center; background: #4b3b41; color: #ddd; font-size: 25px; flex: none; }
.tc-mode { width: 174px; margin: 0 0 8px 22px; }
.tc-spd { width: 190px; margin-left: 24px; font-size: 28px; white-space: nowrap; }
.sidebtns { width: 95px; margin-left: 18px; display: flex; flex-direction: column; flex: none; }
.sbtn { display: flex; align-items: center; justify-content: center; width: 95px; height: 40px; flex: none; background: #fff; border-radius: 9px; box-shadow: 0 1px 2px rgba(0,0,0,.35); }
.sbtn svg { width: 22px; height: 22px; }
.b-up { margin-top: 44px; }
.sbtn.focus { margin-top: 7px; border-radius: 0; background: linear-gradient(#f2f2f2, #e8e8e8); border: 2px solid #a8a8a8; box-shadow: none; }
.b-tr { margin-top: 53px; }
.sbtn.b-tr svg { width: 34px; height: 34px; color: #000; }
.b-nx { margin-top: 48px; }
.b-pv { margin-top: 11px; }
.layerprops { display: flex; margin-top: 18px; height: 124px; flex: none; }
.lp-left { width: 670px; flex: none; display: flex; flex-direction: column; gap: 2px; }
.lp-right { flex: none; display: flex; flex-direction: column; gap: 2px; }
.lp-row { display: flex; align-items: center; height: 40px; flex: none; font-size: 27px; }
.lp-row.off .lpl { color: #b0b0b0; }
.lpl { width: 512px; text-align: right; padding-top: 2px; }
.lpr { width: 199px; text-align: right; white-space: nowrap; padding-top: 2px; }
.colorwell { width: 146px; height: 40px; margin-left: 13px; background: #000; }
.tabs { display: flex; height: 40px; margin: 16px 0 0 6px; flex: none; }
.tab { display: flex; align-items: center; justify-content: center; background: #fff; border-right: 2px solid #e4e4e4; color: #111; box-shadow: 0 1px 2px rgba(0,0,0,.3); flex: none; white-space: nowrap; }
.tab.on { background: #e4e4e4; border-radius: 11px 0 0 11px; }
.tab.last { border: 0; border-radius: 0 11px 11px 0; padding-left: 6px; }
.status { height: 46px; line-height: 46px; padding-left: 3px; font-size: 27.5px; flex: none; }
.btnrow { display: flex; flex: none; }
.r1 { gap: 10px; margin: 14px 0 0 17px; }
.r2 { gap: 10px; margin: 26px 0 0 17px; }
.r3 { gap: 16px; margin: 5px 0 0 17px; }
.btn { display: flex; align-items: center; justify-content: center; gap: 13px; height: 40px; flex: none; background: #fff; border-radius: 10px; box-shadow: 0 1px 2px rgba(0,0,0,.4); color: #111; white-space: nowrap; font-size: 27px; }
.bi { width: 30px; height: 30px; }
.lasergrid { display: flex; margin-top: 27px; height: 255px; flex: none; }
.lg-left { width: 522px; flex: none; }
.lg-right { width: 526px; flex: none; display: flex; flex-direction: column; }
.startfrom { display: flex; align-items: flex-start; height: 40px; }
.sf-l { width: 236px; text-align: right; font-size: 27px; line-height: 40px; margin-top: 4px; white-space: nowrap; flex: none; }
.startfrom .combo { margin-left: 19px; }
.origin { display: flex; align-items: center; margin-top: 19px; height: 83px; }
.origin .sf-l { margin-top: 8px; }
.rad-job { grid-template-columns: 28px 28px 28px; column-gap: 55px; margin-left: 27px; }
.opt { display: flex; align-items: center; gap: 4px; height: 20px; margin-left: 12px; font-size: 27.5px; white-space: nowrap; }
.opt.off { color: #b4b4b4; }
.o1 { margin-top: 90px; }
.o2 { margin-top: 20px; }
.o3 { margin-top: 29px; }
.wide { width: 518px; }
.m1 { margin-top: 25px; }
.m2 { margin-top: 8px; }
.devrow { display: flex; align-items: flex-start; margin: 27px 0 0 17px; flex: none; }
.down-5 { margin-top: 5px; }
.tabs2 { display: flex; margin: 78px 0 0 413px; height: 40px; flex: none; }
.ltab { display: flex; align-items: center; justify-content: center; background: #f9f9f9; box-shadow: 0 1px 2px rgba(0,0,0,.3); border-radius: 0 11px 11px 0; width: 126px; }
.ltab.on { background: #dedede; border-radius: 11px 0 0 11px; width: 109px; }

/* palette */
.palette { height: 32px; flex: none; display: flex; align-items: flex-start; padding-top: 6px; background: linear-gradient(#f2f2f2, #bdbdbd); overflow: hidden; }
.pgrip { width: 4px; height: 26px; flex: none; margin: 6px 0 0 14px; background: radial-gradient(circle, #aaa 1.8px, transparent 2.2px) 0 0 / 4px 12px repeat-y; }
.pgrip2 { width: 4px; height: 26px; flex: none; margin: 0 15px 0 3px; background: radial-gradient(circle, #666 1.1px, transparent 1.5px) 0 0 / 4px 6px repeat-y; }
.sw { display: flex; align-items: center; justify-content: center; width: 48px; height: 46px; margin-right: 12px; flex: none; font-size: 26px; color: #000; }
.palette .pgrip + .sw { margin-left: 7.5px; }
.sw.sel { box-shadow: 0 -4px 0 #c8c8c8; }
.c00 { background: #000; color: #fff; } .c01 { background: #00f; color: #fff; } .c02 { background: #f00; color: #fff; } .c03 { background: #00e000; }
.c04 { background: #c4c400; } .c05 { background: #f07800; } .c06 { background: #00d6d6; } .c07 { background: #f000f0; color: #fff; }
.c08 { background: #aaa; } .c09 { background: #000090; color: #fff; } .c10 { background: #900000; color: #fff; } .c11 { background: #009000; color: #fff; }
.c12 { background: #939300; } .c13 { background: #b07000; } .c14 { background: #00a0f0; color: #fff; } .c15 { background: #900090; color: #fff; }
.c16 { background: #808080; } .c17 { background: #7a7ab8; } .c18 { background: #b06080; } .c19 { background: #4a68c0; color: #fff; }
.c20 { background: #e05068; color: #fff; } .c21 { background: #80c080; } .c22 { background: #e8c090; } .c23 { background: #f0b8c8; }
.c24 { background: #f090c0; } .c25 { background: #500c80; color: #fff; } .c26 { background: #a05020; } .c27 { background: #004c50; color: #fff; }
.c28 { background: #70e890; } .c29 { background: #f0d060; }
.t1 { background: #e56422; } .t2 { background: #0a8cc8; color: #fff; }
```
